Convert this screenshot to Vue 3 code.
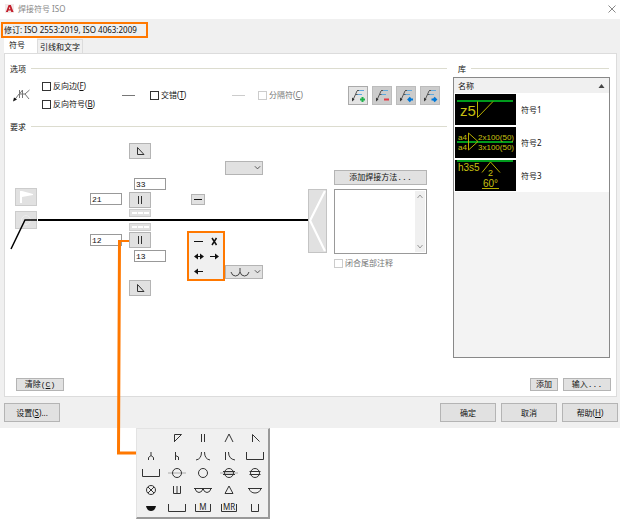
<script setup>
import { ref } from 'vue'

const reverseSides = ref(false)
const reverseSymbols = ref(false)
const stagger = ref(false)
const dims = ref({ upperLeft: '21', upper: '33', lowerLeft: '12', lower: '13' })
const notes = ref('')

const ring = 'M8.5 9a4.5 4.5 0 1 0 9 0a4.5 4.5 0 1 0-9 0'
const wide = 'M4.5 5v7.5h17V5'
const palette = [
  { name: '无' },
  { name: '角焊', d: 'M10.5 13V5.5h7L10.5 12.5' },
  { name: 'I形', d: 'M11.5 5v8M14.5 5v8' },
  { name: 'V形', d: 'M9 13L13 5l4 8' },
  { name: '单边V形', d: 'M10.5 13V5.5L17.5 12.5' },
  { name: 'Y形', d: 'M13 5v3.5M10.5 13v-2.5L13 8.5L15.5 10.5V13' },
  { name: '单边Y形', d: 'M11.5 5v8M11.5 8.5l3 1.5V13' },
  { name: 'U形', d: 'M6 13Q11.5 12 11.5 5M20 13Q14.5 12 14.5 5' },
  { name: 'J形', d: 'M9.5 5v8M12.5 5Q12.5 12 19 13' },
  { name: '塞焊', d: wide },
  { name: '槽焊', d: wide },
  { name: '点焊居中', d: ring, thin: 'M4 9h18' },
  { name: '点焊', d: ring },
  { name: '缝焊居中', d: ring + 'M7 7.5h12M7 10.5h12', thin: 'M4 9h18' },
  { name: '缝焊', d: ring + 'M7.5 7.5h11M7.5 10.5h11' },
  { name: '螺柱焊', d: ring + 'M10 6l6 6M16 6l-6 6' },
  { name: '堆叠', d: 'M9.5 5v7.5h7V5M13 5v7.5' },
  { name: '堆焊', d: 'M4 7.5h18M5 7.5q1 4 4 4t4-4q1 4 4 4t4-4' },
  { name: '三角', d: 'M13 5l4 7.5H9z' },
  { name: '封底', d: 'M6 7.5h14M7 7.5q1.5 4.5 6 4.5t6-4.5' },
  { name: '实心封底', fill: 'M8 7h10q-1 5-5 5t-5-5z' },
  { name: '衬垫', d: wide },
  { name: '永久衬垫', d: 'M5.5 5v7.5h15V5', text: 'M' },
  { name: '临时衬垫', d: 'M5.5 5v7.5h15V5', text: 'MR' },
  { name: '窄衬垫', d: 'M9.5 5v7.5h7V5' }
]

const leaderTools = [
  { name: '添加引线', d: 'M13.5 10v5M11 12.5h5', color: '#22b14c', enabled: true },
  { name: '删除引线', d: 'M11 12.5h5', color: '#e53945' },
  { name: '上一条', d: 'M11 12.5h5M13.5 10.5l-2 2l2 2', color: '#0078d7' },
  { name: '下一条', d: 'M10.5 12.5h5M13 10.5l2 2l-2 2', color: '#0078d7' }
]

const arrows = [
  { name: '直线', d: 'M1 5.5h9' },
  { name: '无', d: 'M4 2l4.5 7M8.5 2l-4.5 7', bold: true },
  { name: '双向', d: 'M2 5.5h8', fill: 'M1 5.5l4-3v6zM11 5.5l-4-3v6z' },
  { name: '向右', d: 'M2 5.5h8', fill: 'M11 5.5l-4-3v6z' },
  { name: '向左', d: 'M2 5.5h8', fill: 'M1 5.5l4-3v6z' }
]
</script>

<template>
  <div class="page">
    <main class="dialog">
      <header class="titlebar">
        <svg class="logo" viewBox="0 0 10 10"><path d="M0 0h10v10H0z" fill="#f3e9e9" /><path d="M1 9L4 1h2.500L9.500 9H7L6.500 7.300H3.700L3.200 9zM4.300 5.700h1.700L5.200 3z" fill="#c31e2b" /></svg>
        <span>焊接符号 ISO</span>
        <button class="close" aria-label="关闭"><svg viewBox="0 0 8 8"><path d="M.5.5l7 7M7.500.5l-7 7" /></svg></button>
      </header>

      <div class="revision"><span>修订: ISO 2553:2019, ISO 4063:2009</span></div>

      <div class="tabs" role="tablist">
        <button class="tab active" role="tab" aria-selected="true">符号</button>
        <button class="tab" role="tab" aria-selected="false">引线和文字</button>
      </div>

      <div class="panel">
        <div class="columns">
          <section class="editor">
            <h2>选项</h2>
            <div class="options">
              <svg class="weld" viewBox="0 0 18 14"><path d="M1.500 12L6 6h6M6.500 2v8M9.500 2v8M9.500 2L6.500 6M12 6l4.500-4M12 6l4 5" /><path d="M0 13.500l1-4l3 2z" class="solid" /></svg>
              <div class="stack">
                <label><input v-model="reverseSides" type="checkbox"><span>反向边(<u>F</u>)</span></label>
                <label><input v-model="reverseSymbols" type="checkbox"><span>反向符号(<u>B</u>)</span></label>
              </div>
              <i class="dash first"></i>
              <label class="stagger"><input v-model="stagger" type="checkbox"><span>交错(<u>T</u>)</span></label>
              <i class="dash second"></i>
              <label class="muted"><input type="checkbox" disabled><span>分隔符(<u>C</u>)</span></label>
              <div class="tools">
                <button v-for="t in leaderTools" :key="t.name" :aria-label="t.name" :disabled="!t.enabled">
                  <svg viewBox="0 0 18 17">
                    <path d="M4 13L8 4M8 3.500h3M7 7.500h2" stroke="#555" />
                    <path d="M10 3.500h5M8.500 7.500H13" stroke="#5fa8dc" />
                    <path d="M3 14.500v-4l2.500 2z" fill="#333" />
                    <path :d="t.d" :stroke="t.color" stroke-width="2" />
                  </svg>
                </button>
              </div>
            </div>

            <h2 class="required">要求</h2>
            <div class="requirements">
              <div class="diagram">
                <button class="node box triangle-top" aria-label="上部轮廓"><svg viewBox="0 0 20 14"><path d="M7.500 3.500v7h6.500z" /></svg></button>
                <input v-model="dims.upper" class="node field upper" aria-label="上部长度">
                <input v-model="dims.upperLeft" class="node field upper-left" aria-label="上部尺寸">
                <button class="node box weld-top" aria-label="上部焊缝"><svg viewBox="0 0 20 14"><path d="M8.500 3v8M11.500 3v8" /></svg></button>
                <button class="node strip strip-top" aria-label="上部标识线"><i></i><i></i><i></i></button>
                <button class="node strip strip-bottom" aria-label="下部标识线"><i></i><i></i><i></i></button>
                <button class="node box weld-bottom" aria-label="下部焊缝"><svg viewBox="0 0 20 14"><path d="M8.500 3v8M11.500 3v8" /></svg></button>
                <input v-model="dims.lowerLeft" class="node field lower-left" aria-label="下部尺寸">
                <input v-model="dims.lower" class="node field lower" aria-label="下部长度">
                <button class="node box triangle-bottom" aria-label="下部轮廓"><svg viewBox="0 0 20 14"><path d="M7.500 3.500v7h6.500z" /></svg></button>
                <button class="node square flag" aria-label="现场焊接"><svg viewBox="0 0 20 16"><path d="M4 2h2l11 3v1L6 8v6H4z" fill="#fff" /></svg></button>
                <button class="node square around" aria-label="全周焊接"><svg viewBox="0 0 20 16"><circle cx="10" cy="8" r="4.500" fill="none" stroke="#eee" /></svg></button>
                <svg class="node leader" viewBox="0 0 28 32"><path d="M1 31L15 2h12" fill="none" stroke="#000" stroke-width="1.500" /></svg>
                <i class="node reference-line"></i>
                <div class="node drop drop-top"><select aria-label="上部表面"><option></option></select><svg viewBox="0 0 8 6"><path d="M1 1l3 3l3-3" /></svg></div>
                <button class="node small-dash" aria-label="箭头样式"><i></i></button>
                <div class="node arrow-menu">
                  <button v-for="(a, n) in arrows" :key="n" :aria-label="a.name"><svg viewBox="0 0 12 11"><path v-if="a.fill" :d="a.fill" class="solid" /><path :d="a.d" :class="{ bold: a.bold }" /></svg></button>
                </div>
                <div class="node drop drop-bottom"><select aria-label="下部表面"><option></option></select><svg viewBox="0 0 8 6"><path d="M1 1l3 3l3-3" /></svg><svg class="preview" viewBox="0 0 20 12"><path d="M1 6q1 4 4.500 4T10 6V2M10 6q1 4 4.500 4T19 6" /></svg></div>
              </div>
              <button class="tail" aria-label="尾部"><svg viewBox="0 0 16 62" preserveAspectRatio="none"><path d="M15 1L1 30.500L15 61" /></svg></button>
              <div class="methods">
                <button class="mono">添加焊接方法...</button>
                <div class="note-box">
                  <textarea v-model="notes" aria-label="尾部注释"></textarea>
                  <div class="scroll"><svg viewBox="0 0 6 5"><path d="M.5 4L3 1l2.500 3" /></svg><svg viewBox="0 0 6 5"><path d="M.5 1L3 4l2.500-3" /></svg></div>
                </div>
                <label class="muted"><input type="checkbox" disabled><span>闭合尾部注释</span></label>
              </div>
            </div>
          </section>

          <section class="library">
            <h2>库</h2>
            <div class="list">
              <table>
                <thead><tr><th colspan="2"><div class="head"><span>名称</span><svg viewBox="0 0 6 4"><path d="M0 4L3 0l3 4z" /></svg></div></th></tr></thead>
                <tbody>
                  <tr>
                    <td class="thumb"><svg viewBox="0 0 61 31"><path class="green" d="M2 7h56" /><path d="M22.500 7.500v16L38 7.500" /><text x="5" y="22" font-size="15">z5</text></svg></td>
                    <td>符号1</td>
                  </tr>
                  <tr>
                    <td class="thumb"><svg viewBox="0 0 61 31"><path class="green" d="M2 15h56" /><path d="M13.500 6v17L23 14.500z" /><text x="3" y="13" font-size="8">a4</text><text x="3" y="23" font-size="8">a4</text><text x="23" y="13" font-size="8">2x100(50)</text><text x="23" y="23" font-size="8">3x100(50)</text></svg></td>
                    <td>符号2</td>
                  </tr>
                  <tr>
                    <td class="thumb"><svg viewBox="0 0 61 31"><path class="green" d="M2 1h56" /><path d="M27 12.500L35.500 2L45 12.500M27 28.500h17" /><text x="3" y="11" font-size="10">h3s5</text><text x="33" y="16" font-size="9">2</text><text x="28" y="27" font-size="10">60°</text></svg></td>
                    <td>符号3</td>
                  </tr>
                </tbody>
              </table>
            </div>
          </section>
        </div>

        <div class="panel-actions">
          <button class="mono clear">清除(<u>C</u>)</button>
          <button class="mono add">添加</button>
          <button class="mono import">输入...</button>
        </div>
      </div>

      <footer class="footer">
        <button class="settings">设置(<u>S</u>)...</button>
        <button>确定</button>
        <button>取消</button>
        <button>帮助(<u>H</u>)</button>
      </footer>
    </main>

    <div class="palette">
      <button v-for="p in palette" :key="p.name" :aria-label="p.name">
        <svg viewBox="0 0 26 17">
          <path v-if="p.thin" :d="p.thin" class="thin" />
          <path v-if="p.d" :d="p.d" />
          <path v-if="p.fill" :d="p.fill" class="solid" />
          <text v-if="p.text" x="13" y="11" text-anchor="middle">{{ p.text }}</text>
        </svg>
      </button>
    </div>

    <svg class="connector" viewBox="0 0 20 216"><path d="M12 2H2.500" stroke-width="2" /><path d="M2.500 1L1.500 214H19" stroke-width="3" /></svg>
  </div>
</template>

<style>
body { margin: 0; background: #fff; }
</style>

<style scoped>
.page { position: relative; font: 8px/12px "Noto Sans", "Noto Sans CJK SC", sans-serif; color: #111; }
.page * { box-sizing: border-box; }
button, input, select, textarea { font: inherit; color: inherit; margin: 0; padding: 0; border-radius: 0; }
button { border: 1px solid #b4b4b4; background: #e1e1e1; }
svg { display: block; fill: none; stroke: #333; stroke-width: 1; }
svg text { stroke: none; }
.solid { fill: #111; stroke: none; }
i { display: block; }

.dialog { margin-right: 4px; background: #f0f0f0; }
.titlebar { display: flex; align-items: center; gap: 4px; height: 19px; padding: 0 4px 2px 5px; background: #fff; color: #888; }
.logo { width: 9px; height: 9px; stroke: none; }
.close { margin-left: auto; border: 0; background: none; }
.close svg { width: 8px; height: 8px; stroke: #888; }

.revision { height: 19px; padding: 3px 1px 0; }
.revision span { display: inline-block; height: 16px; padding: 0 9px 0 1px; border: 2px solid #ff7800; color: #111; }

.tabs { display: flex; height: 15px; padding-left: 4px; align-items: flex-end; }
.tab { height: 14px; padding: 0 2px; border: 1px solid #dcdcdc; border-bottom: 0; background: #f0f0f0; }
.tab.active { height: 15px; width: 33px; padding: 0 7px 2px 0; border-color: #fff; background: #fff; }

.panel { margin: 0 3px 0 4px; padding: 7px 3px 4px 5px; border: 1px solid #dcdcdc; background: #fff; }
.columns { display: flex; gap: 6px; }
.editor { flex: 1; min-width: 0; }
h2 { display: flex; align-items: center; gap: 5px; height: 15px; margin: 0; font: inherit; }
h2::after { content: ""; flex: 1; height: 1px; background: #dcdccf; }

.options { display: flex; align-items: center; height: 36px; margin-top: 1px; padding-left: 3px; }
.weld { width: 18px; height: 14px; stroke: #777; }
.stack { display: flex; flex-direction: column; gap: 6px; width: 80px; margin-left: 11px; }
label { display: flex; align-items: center; gap: 2px; white-space: nowrap; }
label input { appearance: none; flex: none; width: 9px; height: 9px; border: 1px solid #333; background: #fff; }
label input:checked { background: #333; }
.muted { color: #777; }
.muted input { border-color: #ccc; }
.dash { height: 1px; width: 13px; background: #777; }
.dash.first { margin-right: 15px; }
.stagger { width: 82px; }
.dash.second { margin-right: 13px; background: #ccc; }
.tools { display: flex; gap: 4px; margin-left: auto; padding-right: 7px; }
.tools button { width: 20px; height: 19px; background: #ccc; border-color: #bcbcbc; }
.tools button:first-child { background: #e4e4e4; border-color: #aaa; }
.tools svg { width: 18px; height: 17px; }
.tools svg path[fill] { stroke: none; }

.required { margin-top: 6px; }
.requirements { display: flex; height: 244px; padding-right: 20px; }
.diagram { position: relative; flex: 1; }
.node { position: absolute; }
.box { left: 119px; width: 22px; height: 16px; }
.box svg { width: 20px; height: 14px; }
.triangle-top { top: 9px; }
.weld-top { top: 58px; }
.weld-bottom { top: 98px; }
.triangle-bottom { top: 146px; }
.field { width: 32px; height: 12px; padding: 0 1px; border: 1px solid #999; background: #fff; font-family: "Liberation Mono", monospace; line-height: 10px; }
.upper { left: 124px; top: 44px; }
.lower { left: 124px; top: 116px; }
.upper-left { left: 80px; top: 59px; }
.lower-left { left: 80px; top: 100px; }
.strip { left: 119px; display: flex; align-items: center; justify-content: center; gap: 1px; width: 22px; height: 8px; border-color: #ccc; }
.strip i { width: 5px; height: 2px; background: #fff; }
.strip-top { top: 75px; }
.strip-bottom { top: 89px; }
.square { left: 5px; width: 22px; height: 18px; border-color: #ccc; }
.square svg { width: 20px; height: 16px; stroke: none; }
.flag { top: 54px; }
.around { top: 77px; }
.leader { left: 0; top: 84px; width: 28px; height: 32px; }
.reference-line { left: 28px; right: 0; top: 85px; height: 2px; background: #000; }
.drop { left: 215px; width: 38px; height: 14px; }
.drop-top { top: 27px; }
.drop-bottom { top: 131px; }
.drop select { appearance: none; display: block; width: 100%; height: 100%; border: 1px solid #b4b4b4; background: #e1e1e1; }
.drop svg { position: absolute; right: 2px; top: 4px; width: 7px; height: 6px; stroke: #444; pointer-events: none; }
.drop .preview { left: 5px; top: 1px; width: 20px; height: 12px; }
.small-dash { left: 181px; top: 60px; width: 14px; height: 11px; }
.small-dash i { width: 8px; height: 1px; margin: 0 2px; background: #111; }
.arrow-menu { left: 177px; top: 97px; display: grid; grid-template-columns: repeat(2, 15px); grid-auto-rows: 15px; width: 38px; height: 50px; padding: 1px 2px; border: 2px solid #ff7800; background: #f0f0f0; z-index: 1; }
.arrow-menu button { display: grid; place-items: center; border: 0; background: none; }
.arrow-menu svg { width: 12px; height: 11px; stroke: #111; }
.arrow-menu .bold { stroke-width: 1.5; }

.tail { width: 19px; height: 64px; margin-top: 55px; border-color: #c4c4c4; }
.tail svg { width: 17px; height: 62px; stroke: #fff; stroke-width: 2; }
.methods { display: flex; flex-direction: column; width: 93px; margin: 36px 0 0 7px; }
.methods > button { height: 15px; }
.mono { font-family: "Liberation Mono", "Noto Sans CJK SC", monospace; line-height: 11px; }
.note-box { display: flex; height: 65px; margin: 4px 0 3px; padding: 1px; border: 1px solid #999; }
.note-box textarea { flex: 1; min-width: 0; border: 0; outline: 0; resize: none; background: #fff; }
.scroll { display: flex; flex-direction: column; justify-content: space-between; align-items: center; width: 10px; padding: 3px 0; background: #f0f0f0; }
.scroll svg { width: 6px; height: 5px; stroke: #999; }

.library { width: 160px; }
.library h2 { padding: 0 4px 0 5px; }
.list { height: 281px; margin: 1px 3px 0 0; border: 1px solid #888; background: #f3f3f3; }
table { width: 100%; border-collapse: collapse; background: #fff; }
th { padding: 0; font-weight: normal; background: #f0f0f0; }
.head { display: flex; align-items: center; justify-content: space-between; height: 15px; padding: 0 4px; }
.head svg { width: 7px; height: 4px; fill: #444; stroke: none; }
td { height: 33px; padding: 0 0 0 5px; }
td.thumb { width: 62px; padding: 1px 0 1px 1px; }
.thumb svg { width: 61px; height: 31px; background: #000; stroke: #b8b000; font-family: "Liberation Sans", sans-serif; }
.thumb .green { stroke: #009a1c; stroke-width: 2; }
.thumb text { fill: #c8c010; }

.panel-actions { display: flex; gap: 5px; padding: 0 2px 1px 6px; }
.panel-actions button { height: 13px; }
.panel-actions .clear { width: 48px; margin-right: auto; }
.panel-actions .add { width: 28px; }
.panel-actions .import { width: 48px; }

.footer { display: flex; gap: 5px; padding: 6px 2px; }
.footer button { width: 56px; height: 19px; }
.footer .settings { margin: 0 auto 0 2px; }

.palette { display: grid; grid-template-columns: repeat(5, 26px); grid-template-rows: repeat(5, 1fr); width: max-content; height: 91px; margin-left: 136px; padding: 0 0 1px 1px; border: 1px solid #e3e3e3; border-right: 2px solid #999; border-bottom: 2px solid #999; background: #f0f0f0; }
.palette button { display: grid; place-items: center; border: 0; background: none; min-height: 0; }
.palette svg { width: 26px; height: 17px; }
.palette .thin { stroke: #aaa; }
.palette text { fill: #222; font-size: 8px; }
.connector { position: absolute; left: 117px; top: 239px; width: 20px; height: 216px; stroke: #ff7800; pointer-events: none; }
</style>
